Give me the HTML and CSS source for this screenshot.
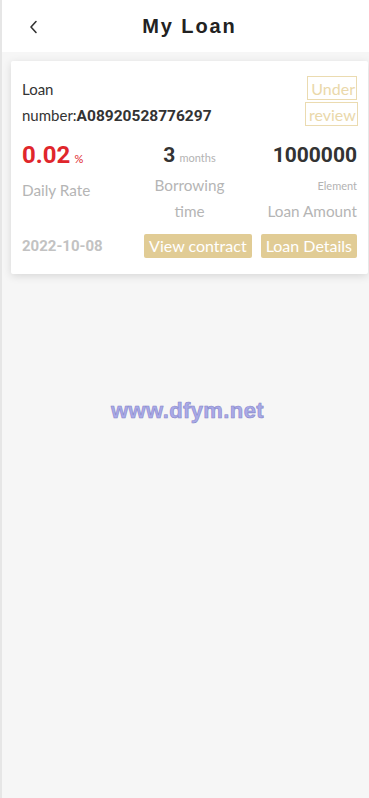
FILE: index.html
```html
<!DOCTYPE html>
<html lang="en">
<head>
<meta charset="utf-8">
<meta name="viewport" content="width=device-width, initial-scale=1">
<title>My Loan</title>
<link rel="stylesheet" href="styles.css">
</head>
<body>
<div class="app">
  <header class="topbar">
    <span class="back" aria-label="Back">
      <svg width="10" height="14" viewBox="0 0 10 14"><polyline points="7,1.5 2,7 7,12.5" fill="none" stroke="#333" stroke-width="1.6" stroke-linecap="round" stroke-linejoin="round"/></svg>
    </span>
    <h1 class="title">My Loan</h1>
  </header>

  <main class="content">
    <section class="card">
      <div class="card-head">
        <div class="loan-no">Loan number:<b class="mono">A08920528776297</b></div>
        <div class="status-wrap"><span class="status">Under review</span></div>
      </div>

      <div class="stats">
        <div class="stat stat-left">
          <div class="value red"><span class="num">0.02</span> <span class="unit red">%</span></div>
          <div class="label label-rate">Daily Rate</div>
        </div>
        <div class="stat stat-mid">
          <div class="value"><span class="num small-num">3</span> <span class="unit">months</span></div>
          <div class="label label-narrow">Borrowing time</div>
        </div>
        <div class="stat stat-right">
          <div class="value"><span class="num small-num">1000000</span></div>
          <div class="unit unit-block">Element</div>
          <div class="label">Loan Amount</div>
        </div>
      </div>

      <div class="card-foot">
        <span class="date">2022-10-08</span>
        <div class="actions">
          <button class="btn">View contract</button>
          <button class="btn">Loan Details</button>
        </div>
      </div>
    </section>
  </main>

  <div class="watermark">www.dfym.net</div>
</div>
</body>
</html>
```

FILE: styles.css
```css
html, body {
  margin: 0;
  padding: 0;
  height: 100%;
}
body {
  overflow: hidden;
  background: #f6f6f6;
  font-family: Lato, "Open Sans", sans-serif;
  color: #333;
}
.app {
  position: relative;
  width: 375px;
  min-height: 798px;
  border-left: 2px solid #e6e6e6;
  background: #f6f6f6;
}
.topbar {
  position: relative;
  height: 52px;
  background: #fff;
  display: flex;
  align-items: center;
  justify-content: center;
}
.back {
  position: absolute;
  left: 27px;
  top: 20px;
  display: block;
  width: 10px;
  height: 14px;
}
.back svg { display: block; }
.title {
  margin: 0;
  font-family: "Liberation Sans", Arial, sans-serif;
  font-size: 20px;
  font-weight: 700;
  letter-spacing: 1.9px;
  color: #222;
  padding-top: 1px;
}
.content {
  padding: 9px 9px 0;
}
.card {
  background: #fff;
  border-radius: 2px;
  box-shadow: 0 2px 8px rgba(0, 0, 0, 0.13);
  padding: 15px 11px 16px;
}
.card-head {
  display: flex;
  justify-content: space-between;
  align-items: flex-start;
}
.loan-no {
  max-width: 200px;
  font-size: 15px;
  line-height: 26px;
  color: #333;
}
.mono {
  font-family: Roboto, sans-serif;
  font-weight: 700;
  font-size: 15.5px;
  color: #333;
}
.status-wrap {
  width: 52px;
  text-align: right;
  font-size: 16px;
  line-height: 26px;
}
.status {
  color: #ead8aa;
  border: 1px solid #ebdbb0;
  padding: 2px 1px 1px 3px;
  -webkit-box-decoration-break: clone;
  box-decoration-break: clone;
}
.stats {
  display: flex;
  margin-top: 11px;
}
.stat {
  flex: 1;
  min-width: 0;
}
.stat-left { text-align: left; }
.stat-mid { text-align: center; }
.stat-right { text-align: right; }
.value {
  line-height: 30px;
  height: 30px;
  color: #333;
}
.num {
  font-family: Roboto, sans-serif;
  font-weight: 700;
  font-size: 24px;
}
.small-num { font-size: 21px; }
.red { color: #e0262c; }
.unit {
  font-size: 11px;
  color: #b3b3b3;
}
.unit.red { color: #e0262c; }
.unit-block {
  display: block;
  line-height: 24px;
  padding-top: 4px;
}
.label {
  font-size: 15.3px;
  line-height: 26px;
  color: #b5b5b5;
}
.label-rate { margin-top: 7px; }
.label-narrow {
  max-width: 80px;
  margin: 2px auto 0;
}
.card-foot {
  display: flex;
  align-items: center;
  justify-content: space-between;
  margin-top: 10px;
}
.date {
  font-family: Roboto, sans-serif;
  font-weight: 700;
  font-size: 15px;
  color: #c2c2c2;
}
.actions {
  display: flex;
  gap: 9px;
}
.btn {
  border: 0;
  margin: 0;
  background: #e1cc95;
  color: #fff;
  font-family: Lato, "Open Sans", sans-serif;
  font-size: 16px;
  line-height: 24px;
  height: 24px;
  padding: 0 5px;
  border-radius: 2px;
}
.watermark {
  position: absolute;
  left: 0;
  top: 398px;
  width: 371px;
  text-align: center;
  font-family: "Liberation Sans", Arial, sans-serif;
  font-weight: 700;
  font-size: 22px;
  letter-spacing: 0.4px;
  color: #aaaae8;
  -webkit-text-stroke: 0.6px #8686c9;
}
```
